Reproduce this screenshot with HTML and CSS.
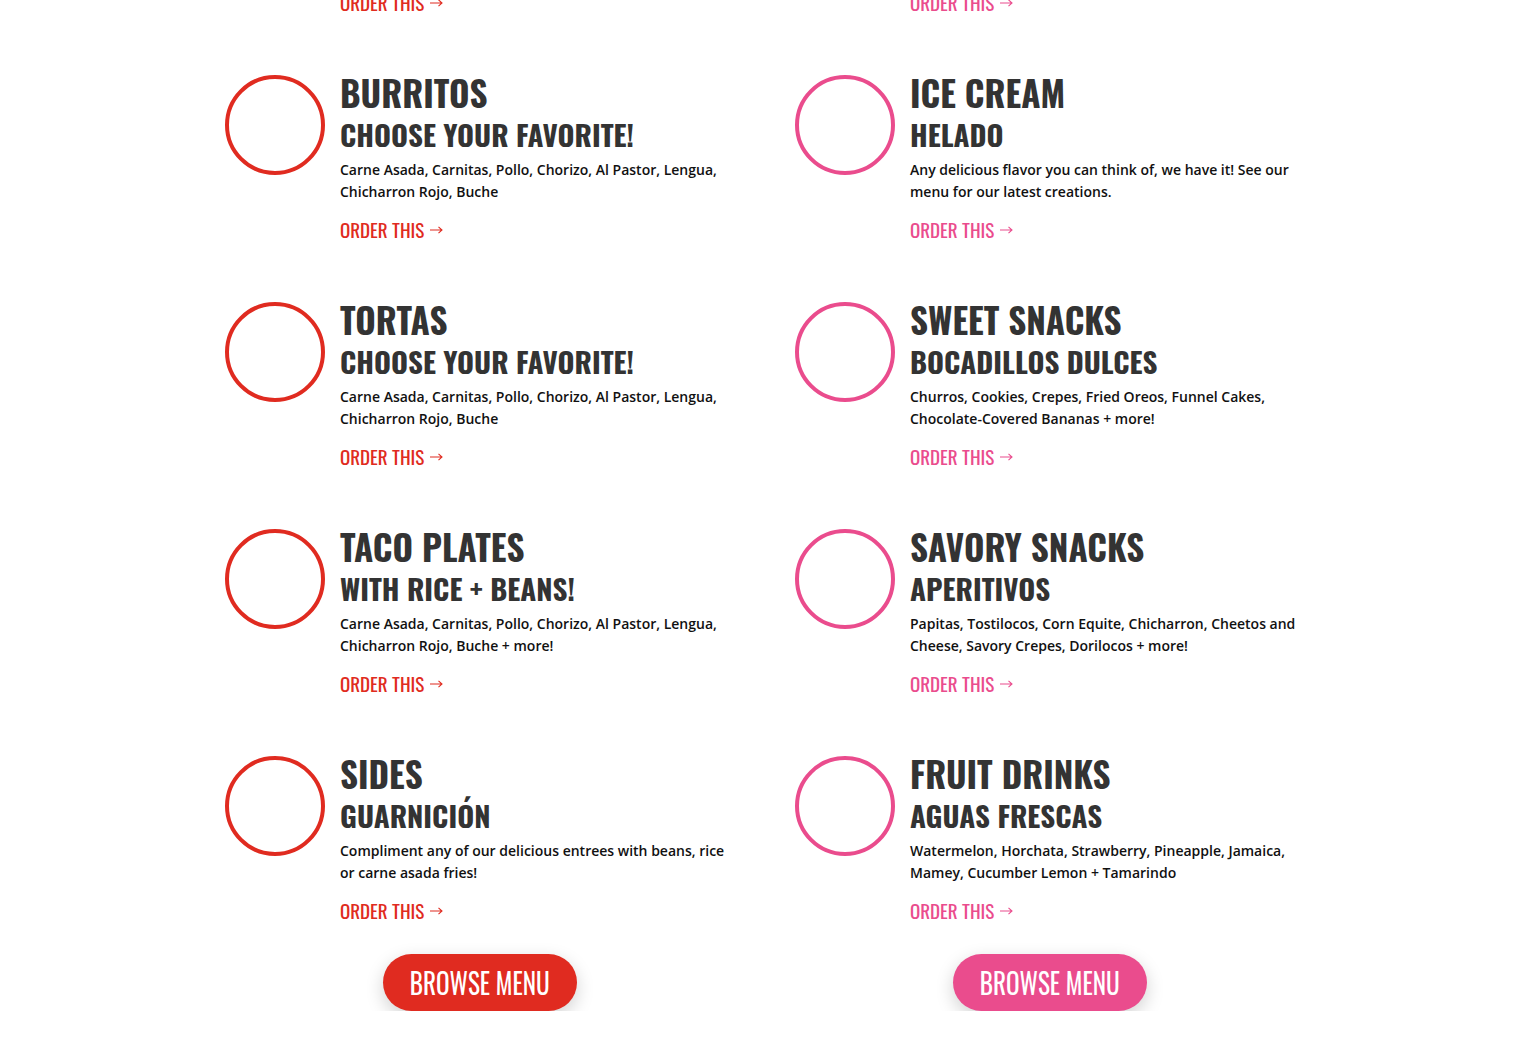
FILE: index.html
```html
<!DOCTYPE html>
<html lang="en">
<head>
<meta charset="utf-8">
<title>Menu</title>
<link rel="stylesheet" href="styles.css">
</head>
<body>
<main class="menu">
  <div class="col red">
    <div class="item">
      <div class="circle"></div>
      <div class="text">
        <h2 class="title">TACOS</h2>
        <h3 class="sub">CHOOSE YOUR FAVORITE!</h3>
        <p class="desc">Carne Asada, Carnitas, Pollo, Chorizo, Al Pastor, Lengua, Chicharron Rojo, Buche</p>
        <a class="order" href="#">ORDER THIS <svg class="arrow" viewBox="0 0 13 8" width="13" height="8"><path d="M0 4H12M8.5 0.8L12 4L8.5 7.2"/></svg></a>
      </div>
    </div>
    <div class="item">
      <div class="circle"></div>
      <div class="text">
        <h2 class="title">BURRITOS</h2>
        <h3 class="sub">CHOOSE YOUR FAVORITE!</h3>
        <p class="desc">Carne Asada, Carnitas, Pollo, Chorizo, Al Pastor, Lengua, Chicharron Rojo, Buche</p>
        <a class="order" href="#">ORDER THIS <svg class="arrow" viewBox="0 0 13 8" width="13" height="8"><path d="M0 4H12M8.5 0.8L12 4L8.5 7.2"/></svg></a>
      </div>
    </div>
    <div class="item">
      <div class="circle"></div>
      <div class="text">
        <h2 class="title">TORTAS</h2>
        <h3 class="sub">CHOOSE YOUR FAVORITE!</h3>
        <p class="desc">Carne Asada, Carnitas, Pollo, Chorizo, Al Pastor, Lengua, Chicharron Rojo, Buche</p>
        <a class="order" href="#">ORDER THIS <svg class="arrow" viewBox="0 0 13 8" width="13" height="8"><path d="M0 4H12M8.5 0.8L12 4L8.5 7.2"/></svg></a>
      </div>
    </div>
    <div class="item">
      <div class="circle"></div>
      <div class="text">
        <h2 class="title">TACO PLATES</h2>
        <h3 class="sub">WITH RICE + BEANS!</h3>
        <p class="desc">Carne Asada, Carnitas, Pollo, Chorizo, Al Pastor, Lengua, Chicharron Rojo, Buche + more!</p>
        <a class="order" href="#">ORDER THIS <svg class="arrow" viewBox="0 0 13 8" width="13" height="8"><path d="M0 4H12M8.5 0.8L12 4L8.5 7.2"/></svg></a>
      </div>
    </div>
    <div class="item">
      <div class="circle"></div>
      <div class="text">
        <h2 class="title">SIDES</h2>
        <h3 class="sub">GUARNICIÓN</h3>
        <p class="desc">Compliment any of our delicious entrees with beans, rice or carne asada fries!</p>
        <a class="order" href="#">ORDER THIS <svg class="arrow" viewBox="0 0 13 8" width="13" height="8"><path d="M0 4H12M8.5 0.8L12 4L8.5 7.2"/></svg></a>
      </div>
    </div>
    <div class="btn-wrap"><a class="btn" href="#"><span class="btn-label">BROWSE MENU</span></a></div>
  </div>

  <div class="col pink">
    <div class="item">
      <div class="circle"></div>
      <div class="text">
        <h2 class="title">SHAVED ICE</h2>
        <h3 class="sub">RASPADOS</h3>
        <p class="desc">Refreshing shaved ice with all of your favorite flavors and toppings.</p>
        <a class="order" href="#">ORDER THIS <svg class="arrow" viewBox="0 0 13 8" width="13" height="8"><path d="M0 4H12M8.5 0.8L12 4L8.5 7.2"/></svg></a>
      </div>
    </div>
    <div class="item">
      <div class="circle"></div>
      <div class="text">
        <h2 class="title">ICE CREAM</h2>
        <h3 class="sub">HELADO</h3>
        <p class="desc">Any delicious flavor you can think of, we have it! See our menu for our latest creations.</p>
        <a class="order" href="#">ORDER THIS <svg class="arrow" viewBox="0 0 13 8" width="13" height="8"><path d="M0 4H12M8.5 0.8L12 4L8.5 7.2"/></svg></a>
      </div>
    </div>
    <div class="item">
      <div class="circle"></div>
      <div class="text">
        <h2 class="title">SWEET SNACKS</h2>
        <h3 class="sub">BOCADILLOS DULCES</h3>
        <p class="desc">Churros, Cookies, Crepes, Fried Oreos, Funnel Cakes, Chocolate-Covered Bananas + more!</p>
        <a class="order" href="#">ORDER THIS <svg class="arrow" viewBox="0 0 13 8" width="13" height="8"><path d="M0 4H12M8.5 0.8L12 4L8.5 7.2"/></svg></a>
      </div>
    </div>
    <div class="item">
      <div class="circle"></div>
      <div class="text">
        <h2 class="title">SAVORY SNACKS</h2>
        <h3 class="sub">APERITIVOS</h3>
        <p class="desc">Papitas, Tostilocos, Corn Equite, Chicharron, Cheetos and Cheese, Savory Crepes, Dorilocos + more!</p>
        <a class="order" href="#">ORDER THIS <svg class="arrow" viewBox="0 0 13 8" width="13" height="8"><path d="M0 4H12M8.5 0.8L12 4L8.5 7.2"/></svg></a>
      </div>
    </div>
    <div class="item">
      <div class="circle"></div>
      <div class="text">
        <h2 class="title">FRUIT DRINKS</h2>
        <h3 class="sub">AGUAS FRESCAS</h3>
        <p class="desc">Watermelon, Horchata, Strawberry, Pineapple, Jamaica, Mamey, Cucumber Lemon + Tamarindo</p>
        <a class="order" href="#">ORDER THIS <svg class="arrow" viewBox="0 0 13 8" width="13" height="8"><path d="M0 4H12M8.5 0.8L12 4L8.5 7.2"/></svg></a>
      </div>
    </div>
    <div class="btn-wrap"><a class="btn" href="#"><span class="btn-label">BROWSE MENU</span></a></div>
  </div>
</main>
</body>
</html>
```
FILE: styles.css
```css
html, body {
  margin: 0;
  padding: 0;
  background: #fff;
}
body {
  font-family: "Open Sans", "Liberation Sans", sans-serif;
  overflow: hidden;
}
.menu {
  width: 1080px;
  margin: -155px auto 0;
  display: grid;
  grid-template-columns: 510px 510px;
  column-gap: 60px;
}
.col {
  display: flex;
  flex-direction: column;
}
.red { --accent: #e02b20; }
.pink { --accent: #ea4c8d; }

.item {
  display: flex;
  align-items: flex-start;
  gap: 15px;
  height: 227px;
}
.circle {
  flex: 0 0 auto;
  width: 100px;
  height: 100px;
  box-sizing: border-box;
  border: 4px solid var(--accent);
  border-radius: 50%;
  margin-top: 3px;
}
.text {
  flex: 1;
  min-width: 0;
}
.title, .sub {
  font-family: "Oswald", "Open Sans", sans-serif;
  font-weight: 700;
  color: #333;
  margin: 0;
}
.title {
  font-size: 35px;
  line-height: 40px;
}
.sub {
  font-size: 29px;
  line-height: 44px;
}
.desc {
  font-size: 14px;
  line-height: 22px;
  font-weight: 600;
  color: #111;
  margin: 3px 0 14px;
}
.order {
  display: inline-flex;
  align-items: center;
  gap: 6px;
  font-family: "Oswald", "Open Sans", sans-serif;
  font-size: 19px;
  line-height: 24px;
  font-weight: 400;
  color: var(--accent);
  text-decoration: none;
}
.arrow {
  fill: none;
  stroke: currentColor;
  stroke-width: 1.1;
  margin-top: 1px;
}
.btn-wrap {
  display: flex;
  justify-content: center;
  margin-top: -26px;
}
.btn {
  display: inline-flex;
  align-items: center;
  justify-content: center;
  width: 194px;
  height: 57px;
  border-radius: 29px;
  background: var(--accent);
  color: #fff;
  font-family: "Oswald", "Open Sans", sans-serif;
  font-size: 28px;
  font-weight: 400;
  text-decoration: none;
  box-shadow: 0 6px 18px rgba(0, 0, 0, 0.18);
}
.btn-label {
  display: inline-block;
  transform: scaleX(0.9);
}
```
